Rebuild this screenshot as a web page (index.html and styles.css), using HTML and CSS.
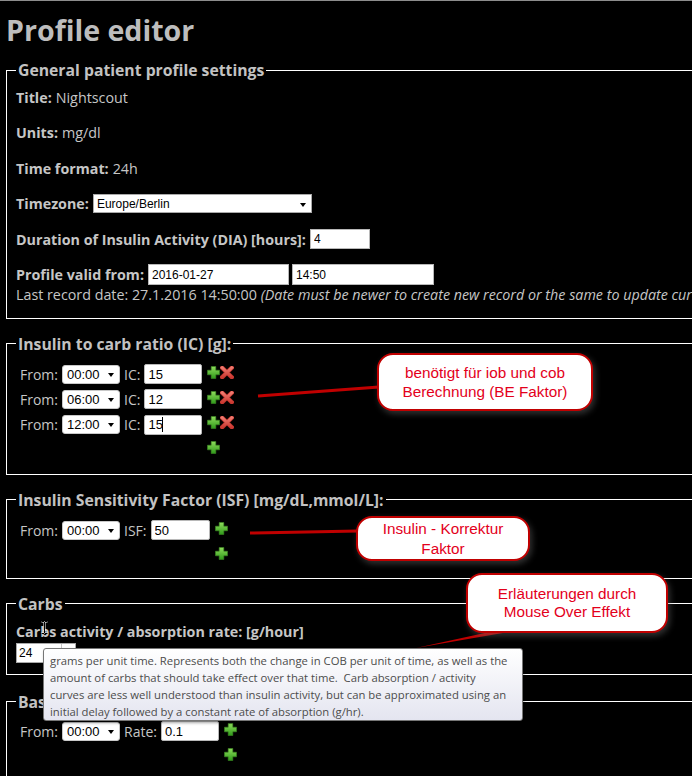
FILE: index.html
```html
<!DOCTYPE html>
<html lang="en">
<head>
<meta charset="utf-8">
<title>Profile editor</title>
<link rel="stylesheet" href="styles.css">
</head>
<body>
<div class="page">
  <h1 class="page-title">Profile editor</h1>

  <div class="sections">
    <fieldset class="section section-general">
      <legend>General patient profile settings</legend>
      <div class="field"><span class="label">Title:</span><span>Nightscout</span></div>
      <div class="field"><span class="label">Units:</span><span>mg/dl</span></div>
      <div class="field"><span class="label">Time format:</span><span>24h</span></div>
      <div class="field"><span class="label">Timezone:</span>
        <span class="select-wrap select-tz"><select class="select select-wide"><option>Europe/Berlin</option></select></span>
      </div>
      <div class="field"><span class="label">Duration of Insulin Activity (DIA) [hours]:</span>
        <input class="input input-small input-dia" type="text" value="4">
      </div>
      <div class="field field-tight"><span class="label">Profile valid from:</span>
        <input class="input input-small input-date" type="text" value="2016-01-27">
        <input class="input input-small input-date input-time" type="text" value="14:50">
      </div>
      <div class="note">Last record date: 27.1.2016 14:50:00 <i>(Date must be newer to create new record or the same to update current record)</i></div>
    </fieldset>

    <fieldset class="section section-ranges section-ic">
      <legend>Insulin to carb ratio (IC) [g]:</legend>
      <div class="ranges">
        <span>From:</span>
        <span class="select-wrap select-time"><select class="select"><option>00:00</option></select></span>
        <span>IC:</span>
        <input class="input input-range" type="text" value="15">
        <span class="icons"><svg class="icon" viewBox="0 0 13 13" width="13" height="13"><use href="#plus"/></svg><svg class="icon icon-x" viewBox="0 0 14 13" width="14" height="13"><use href="#cross"/></svg></span>

        <span>From:</span>
        <span class="select-wrap select-time"><select class="select"><option>06:00</option></select></span>
        <span>IC:</span>
        <input class="input input-range" type="text" value="12">
        <span class="icons"><svg class="icon" viewBox="0 0 13 13" width="13" height="13"><use href="#plus"/></svg><svg class="icon icon-x" viewBox="0 0 14 13" width="14" height="13"><use href="#cross"/></svg></span>

        <span>From:</span>
        <span class="select-wrap select-time"><select class="select"><option>12:00</option></select></span>
        <span>IC:</span>
        <span class="caret-field"><input class="input input-range" type="text" value="15"><span class="caret"></span></span>
        <span class="icons"><svg class="icon" viewBox="0 0 13 13" width="13" height="13"><use href="#plus"/></svg><svg class="icon icon-x" viewBox="0 0 14 13" width="14" height="13"><use href="#cross"/></svg></span>

        <span class="icons add-cell"><svg class="icon" viewBox="0 0 13 13" width="13" height="13"><use href="#plus"/></svg></span>
      </div>
    </fieldset>

    <fieldset class="section section-ranges section-isf">
      <legend>Insulin Sensitivity Factor (ISF) [mg/dL,mmol/L]:</legend>
      <div class="ranges">
        <span>From:</span>
        <span class="select-wrap select-time"><select class="select"><option>00:00</option></select></span>
        <span>ISF:</span>
        <input class="input input-range input-isf" type="text" value="50">
        <span class="icons"><svg class="icon" viewBox="0 0 13 13" width="13" height="13"><use href="#plus"/></svg></span>
        <span class="icons add-cell"><svg class="icon" viewBox="0 0 13 13" width="13" height="13"><use href="#plus"/></svg></span>
      </div>
    </fieldset>

    <fieldset class="section section-carbs">
      <legend>Carbs</legend>
      <div class="carbs-label">Carbs activity / absorption rate: [g/hour]</div>
      <div class="carbs-row">
        <span class="spin-input"><input class="spin-field" type="text" value="24"><span class="spinner"></span></span>
      </div>
    </fieldset>

    <fieldset class="section section-ranges section-basal">
      <legend>Basal rates [unit/hour]</legend>
      <div class="ranges">
        <span>From:</span>
        <span class="select-wrap select-time"><select class="select"><option>00:00</option></select></span>
        <span>Rate:</span>
        <input class="input input-range" type="text" value="0.1">
        <span class="icons icons-basal"><svg class="icon" viewBox="0 0 13 13" width="13" height="13"><use href="#plus"/></svg></span>
        <span class="icons icons-basal add-cell"><svg class="icon" viewBox="0 0 13 13" width="13" height="13"><use href="#plus"/></svg></span>
      </div>
    </fieldset>
  </div>

  <svg class="callout-lines" width="692" height="776" viewBox="0 0 692 776" aria-hidden="true">
    <line x1="258" y1="396" x2="379" y2="387" class="pointer"/>
    <line x1="250" y1="533" x2="358" y2="531" class="pointer"/>
    <polygon points="416,648 503,629 526,629" class="pointer-wedge"/>
  </svg>

  <div class="callout callout-ic">benötigt für iob und cob<br>Berechnung (BE Faktor)</div>
  <div class="callout callout-isf">Insulin - Korrektur<br>Faktor</div>
  <div class="callout callout-hover">Erläuterungen durch<br>Mouse Over Effekt</div>

  <div class="tooltip">
    <div class="tooltip-line">grams per unit time. Represents both the change in COB per unit of time, as well as the</div>
    <div class="tooltip-line">amount of carbs that should take effect over that time.  Carb absorption / activity</div>
    <div class="tooltip-line">curves are less well understood than insulin activity, but can be approximated using an</div>
    <div class="tooltip-line">initial delay followed by a constant rate of absorption (g/hr).</div>
  </div>

  <svg class="ibeam" width="7" height="13" viewBox="0 0 7 13" aria-hidden="true">
    <path d="M0.5 0.5h2.5l0.5 0.5 0.5-0.5h2.5M3.5 1v11M0.5 12.5h2.5l0.5-0.5 0.5 0.5h2.5" fill="none" stroke="#fff" stroke-width="2"/>
    <path d="M0.5 0.5h2.5l0.5 0.5 0.5-0.5h2.5M3.5 1v11M0.5 12.5h2.5l0.5-0.5 0.5 0.5h2.5" fill="none" stroke="#000" stroke-width="1"/>
  </svg>
</div>

<svg class="defs" width="0" height="0" aria-hidden="true">
  <defs>
    <linearGradient id="plusGrad" x1="0" y1="0" x2="0" y2="1">
      <stop offset="0" stop-color="#8fdc5c"/>
      <stop offset="1" stop-color="#2f9a1a"/>
    </linearGradient>
    <linearGradient id="crossGrad" x1="0" y1="0" x2="0" y2="1">
      <stop offset="0" stop-color="#f07a70"/>
      <stop offset="1" stop-color="#cc3a32"/>
    </linearGradient>
    <symbol id="plus" viewBox="0 0 13 13">
      <path d="M4.2 0.5h4.6v3.7h3.7v4.6H8.8v3.7H4.2V8.8H0.5V4.2h3.7z" fill="url(#plusGrad)" stroke="#3a8a22" stroke-width="0.6"/>
    </symbol>
    <symbol id="cross" viewBox="0 0 14 13">
      <path d="M2.2 1.8L11.8 11.2M11.8 1.8L2.2 11.2" stroke="#b8322b" stroke-width="4.4" stroke-linecap="square"/>
      <path d="M2.2 1.8L11.8 11.2M11.8 1.8L2.2 11.2" stroke="url(#crossGrad)" stroke-width="3" stroke-linecap="square"/>
    </symbol>
  </defs>
</svg>
</body>
</html>
```

FILE: styles.css
```css
* { box-sizing: border-box; }

html, body {
  margin: 0;
  padding: 0;
  background: #000;
  overflow: hidden;
}

body {
  font-family: "Open Sans", "Liberation Sans", sans-serif;
  font-size: 14px;
  color: #c6c6c6;
}

.page {
  position: relative;
  width: 800px;
  min-height: 775px;
  border-top: 1px solid #8c8c8c;
  padding: 13px 0 0 6px;
}

.page-title {
  margin: 0 0 14px 0;
  font-size: 28.6px;
  line-height: 32px;
  font-weight: 700;
  color: #bdbdbd;
}

.sections {
  display: flex;
  flex-direction: column;
  gap: 15px;
}

.section {
  margin: 0;
  min-width: 0;
  border: 1px solid #fff;
  padding: 8px 0 12px 9px;
}

.section legend {
  font-size: 15.75px;
  line-height: 20px;
  font-weight: 700;
  padding: 0 2px;
  color: #c2c2c2;
}

/* General section */
.section-general {
  padding: 7px 0 13px 9px;
  font-size: 14.3px;
}

.field {
  display: flex;
  align-items: center;
  gap: 4px;
  height: 20px;
  white-space: nowrap;
  margin-bottom: 15.6px;
}

.field-tight { margin-bottom: 0; }

.label { font-weight: 700; }

.note {
  line-height: 20px;
  white-space: nowrap;
}

/* Form controls */
.select-wrap {
  position: relative;
  display: inline-block;
}

.select-wrap::after {
  content: "";
  position: absolute;
  top: 50%;
  right: 6px;
  margin-top: -1px;
  border-left: 3.5px solid transparent;
  border-right: 3.5px solid transparent;
  border-top: 4px solid #000;
}

.select {
  appearance: none;
  -webkit-appearance: none;
  display: block;
  width: 100%;
  height: 100%;
  margin: 0;
  background: #fff;
  color: #000;
  font-family: "Liberation Sans", Arial, sans-serif;
  font-size: 13px;
  border: 1px solid #c8c8c8;
  border-radius: 3px;
  padding: 0 0 0 4px;
}

.select-tz {
  width: 219px;
  height: 19px;
}

.select-wide {
  font-size: 12px;
  border-radius: 0;
  border-color: #a9a9a9;
  padding-left: 3px;
}

.select-time {
  width: 58px;
  height: 19px;
}

.input {
  margin: 0;
  background: #fff;
  color: #000;
  font-family: "Liberation Sans", Arial, sans-serif;
  border: 1px solid #b8b8b8;
  outline: none;
}

.input-small {
  font-size: 12px;
  height: 20px;
  padding: 0 3px;
}

.input-dia { width: 60px; }

.input-date { width: 141px; height: 21px; }

.input-time { width: 142px; margin-left: -1px; }

.input-range {
  width: 58px;
  height: 20px;
  font-size: 13px;
  padding: 0 3px;
  border-radius: 2px;
}

.input-isf { width: 59px; }

.caret-field {
  position: relative;
  display: block;
}

.caret {
  position: absolute;
  left: 18px;
  top: 3px;
  width: 1px;
  height: 15px;
  background: #000;
}

/* Time-range grids */
.ranges {
  display: grid;
  grid-template-columns: repeat(5, auto);
  justify-content: start;
  align-items: center;
  grid-auto-rows: 25px;
  column-gap: 4px;
  padding-left: 4px;
  white-space: nowrap;
}

.icons {
  display: flex;
  align-self: start;
  margin-top: 4px;
  margin-left: 1px;
}

.add-cell {
  grid-column: 5;
}

.icon { display: block; }

.section-ic { padding: 8px 0 12px 9px; }
.section-isf { padding: 8px 0 10px 9px; }
.section-basal { margin-top: 2px; padding: 7px 0 12px 9px; }

/* Carbs */
.section-carbs { padding: 8px 0 11px 9px; }

.carbs-label {
  font-weight: 700;
  font-size: 14.3px;
  line-height: 20px;
  white-space: nowrap;
}

.carbs-row {
  height: 21px;
  padding-top: 1px;
}

.spin-input {
  display: flex;
  width: 60px;
  height: 20px;
  background: #fff;
  border: 1px solid #a9a9a9;
}

.spin-field {
  width: 44px;
  height: 18px;
  margin: 0;
  border: 0;
  outline: none;
  padding: 0 2px;
  font-family: "Liberation Sans", Arial, sans-serif;
  font-size: 12px;
  color: #000;
  background: transparent;
}

.spinner {
  flex: 1;
  border-left: 1px solid #c4c4c4;
}

/* Annotation overlays */
.callout-lines {
  position: absolute;
  left: 0;
  top: -1px;
  pointer-events: none;
}

.pointer {
  stroke: #c00000;
  stroke-width: 3;
}

.pointer-wedge {
  fill: #c00000;
}

.callout {
  position: absolute;
  display: flex;
  align-items: center;
  justify-content: center;
  text-align: center;
  background: #fff;
  border: 2px solid #c00000;
  border-radius: 16px;
  color: #e3001b;
  font-family: "Liberation Sans", Arial, sans-serif;
  font-size: 15.3px;
  line-height: 19px;
  box-shadow: 2px 3px 6px rgba(110, 110, 110, 0.45);
  white-space: nowrap;
}

.callout-ic {
  left: 377px;
  top: 352px;
  width: 216px;
  height: 58px;
}

.callout-isf {
  left: 356px;
  top: 515px;
  width: 174px;
  height: 45px;
  line-height: 20px;
}

.callout-hover {
  left: 466px;
  top: 572px;
  width: 202px;
  height: 60px;
  line-height: 18px;
}

.tooltip {
  position: absolute;
  left: 43px;
  top: 647px;
  width: 480px;
  height: 73px;
  padding: 3px 0 0 6px;
  border: 1px solid #767676;
  border-radius: 3px;
  background: linear-gradient(#ffffff, #e4e5f0);
  box-shadow: 1px 2px 3px rgba(0, 0, 0, 0.35);
  color: #4c4c4c;
  font-family: "Open Sans", "Liberation Sans", sans-serif;
  font-size: 11.3px;
  line-height: 17px;
}

.tooltip-line { white-space: pre; }

.ibeam {
  position: absolute;
  left: 41px;
  top: 620px;
}

.defs {
  position: absolute;
  width: 0;
  height: 0;
}
```
